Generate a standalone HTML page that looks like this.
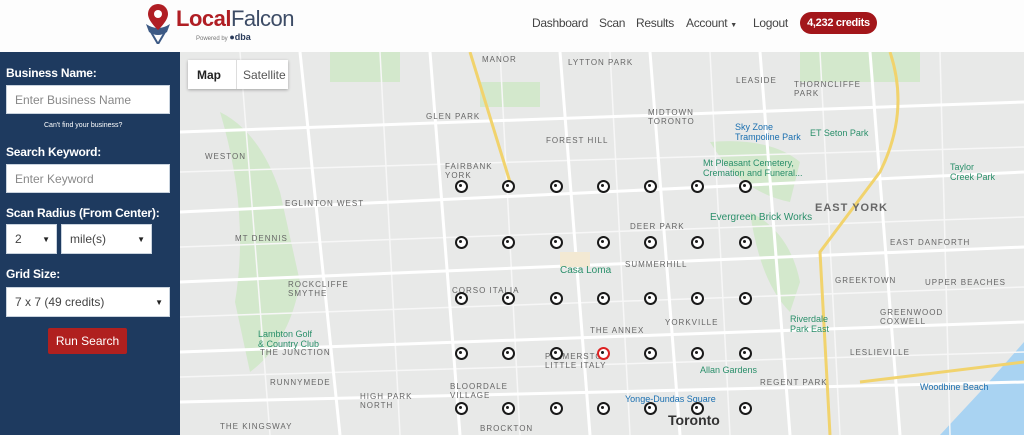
<!DOCTYPE html>
<html><head><meta charset="utf-8"><style>
*{margin:0;padding:0;box-sizing:border-box}
body{width:1024px;height:435px;overflow:hidden;font-family:"Liberation Sans",sans-serif;background:#fff;position:relative}
.hdr{position:absolute;left:0;top:0;width:1024px;height:52px;background:#fdfdfd}
.nav{position:absolute;top:16px;font-size:12px;letter-spacing:-0.3px;color:#444;white-space:nowrap}
.cred{position:absolute;left:800px;top:12px;width:77px;height:22px;background:#a3161a;border-radius:11px;color:#fff;font-size:11px;font-weight:bold;text-align:center;line-height:22px;letter-spacing:-0.3px}
.side{position:absolute;left:0;top:52px;width:180px;height:383px;background:#1e3a5f}
.lbl{position:absolute;left:6px;color:#fff;font-weight:bold;font-size:12px;letter-spacing:-0.2px}
.inp{position:absolute;background:#fff;border:1px solid #c9d3de;color:#888;font-size:12px;padding-left:8px;display:flex;align-items:center}
.sel{color:#444}
.sel b{position:absolute;right:6px;font-size:8px;color:#222}
.map{position:absolute;left:180px;top:52px;width:844px;height:383px;background:#e8e9e8;overflow:hidden}
.mk{position:absolute;width:13px;height:13px;border:2.5px solid #1a1a1a;border-radius:50%;background:#fff}
.mk:after{content:"";position:absolute;left:2.5px;top:2.5px;width:3px;height:3px;background:#1a1a1a;border-radius:50%}
.t{position:absolute;font-size:8px;color:#666;letter-spacing:1px}
</style></head><body>
<div class="hdr">
 <svg style="position:absolute;left:143px;top:2px" width="30" height="42" viewBox="0 0 30 42">
  <path d="M3 22 Q15 30 27 22 L24 30 Q15 36 6 30Z" fill="#3d5a85"/>
  <path d="M8 30 L15 42 L22 30" stroke="#3d5a85" stroke-width="2" fill="none"/>
  <path d="M15 2 A10 10 0 0 1 25 12 C25 19 15 28 15 28 C15 28 5 19 5 12 A10 10 0 0 1 15 2Z" fill="#b01e24"/>
  <circle cx="15" cy="12" r="4" fill="#fff"/>
 </svg>
 <div style="position:absolute;left:176px;top:6px;font-size:22px;letter-spacing:-0.5px"><b style="color:#b01e24">Local</b><span style="color:#3d4c66">Falcon</span></div>
 <div style="position:absolute;left:196px;top:32px;font-size:6px;color:#777">Powered by <b style="font-size:9px;color:#2a3b5a">●dba</b></div>
 <div class="nav" style="left:532px">Dashboard</div>
 <div class="nav" style="left:599px">Scan</div>
 <div class="nav" style="left:636px">Results</div>
 <div class="nav" style="left:686px">Account <span style="font-size:7px">▼</span></div>
 <div class="nav" style="left:753px">Logout</div>
 <div class="cred">4,232 credits</div>
</div>
<div class="side">
 <div class="lbl" style="top:14px">Business Name:</div>
 <div class="inp" style="left:6px;top:33px;width:164px;height:29px">Enter Business Name</div>
 <div style="position:absolute;left:44px;top:70px;font-size:7px;color:#fff">Can't find your business?</div>
 <div class="lbl" style="top:93px">Search Keyword:</div>
 <div class="inp" style="left:6px;top:112px;width:164px;height:29px">Enter Keyword</div>
 <div class="lbl" style="top:154px">Scan Radius (From Center):</div>
 <div class="inp sel" style="left:6px;top:172px;width:51px;height:30px">2<b>▼</b></div>
 <div class="inp sel" style="left:61px;top:172px;width:91px;height:30px">mile(s)<b>▼</b></div>
 <div class="lbl" style="top:215px">Grid Size:</div>
 <div class="inp sel" style="left:6px;top:235px;width:164px;height:30px">7 x 7 (49 credits)<b>▼</b></div>
 <div style="position:absolute;left:48px;top:276px;width:79px;height:26px;background:#b0201f;color:#fff;font-size:12px;text-align:center;line-height:26px;border-radius:2px">Run Search</div>
</div>
<div class="map">
 <svg width="844" height="383" style="position:absolute;left:0;top:0">
  <g fill="#d3e8cc">
   <path d="M40 60 Q80 80 100 140 L120 230 Q110 290 70 320 L55 250 Q70 160 40 60Z"/>
   <path d="M530 90 Q590 85 620 110 L610 150 Q560 140 530 90Z"/>
   <path d="M570 160 Q610 180 620 230 L610 260 Q580 230 570 160Z"/>
   <rect x="150" y="0" width="70" height="30"/>
   <rect x="300" y="30" width="60" height="25"/>
   <rect x="620" y="0" width="120" height="30"/>
  </g>
  <path d="M844 290 L800 340 L760 383 L844 383Z" fill="#a9d3f2"/>
  <g stroke="#f7f7f7" stroke-width="1.5" fill="none">
   <path d="M0 120 L844 95"/><path d="M0 195 L844 165"/><path d="M0 265 L844 235"/><path d="M0 325 L844 300"/>
   <path d="M60 0 L90 383"/><path d="M200 0 L220 383"/><path d="M320 0 L340 383"/><path d="M430 0 L450 383"/><path d="M530 0 L550 383"/><path d="M640 0 L660 383"/><path d="M760 0 L770 383"/>
  </g>
  <g stroke="#fff" stroke-width="3" fill="none">
   <path d="M0 160 L844 120"/><path d="M0 230 L844 195"/><path d="M0 300 L844 270"/><path d="M0 350 L844 330"/>
   <path d="M0 80 L844 50"/><path d="M120 0 L160 383"/><path d="M250 0 L280 383"/><path d="M380 0 L410 383"/>
   <path d="M470 0 L500 383"/><path d="M580 0 L610 383"/><path d="M690 0 L720 383"/>
  </g>
  <g stroke="#f1d36d" stroke-width="3" fill="none">
   <path d="M290 0 L330 130"/>
   <path d="M710 0 Q730 60 700 120 L640 200 L650 383"/>
   <path d="M680 330 L844 310"/>
  </g>
  <rect x="380" y="200" width="30" height="15" fill="#f3e9d3"/>
 </svg>
 <div style="position:absolute;left:8px;top:8px;width:100px;height:29px;background:#fff;box-shadow:0 1px 3px rgba(0,0,0,.3);font-size:12px">
  <span style="position:absolute;left:9px;top:8px;font-weight:bold;color:#222">Map</span>
  <span style="position:absolute;left:48px;top:0;width:1px;height:29px;background:#ddd"></span>
  <span style="position:absolute;left:55px;top:8px;color:#555">Satellite</span>
 </div>
 <div class="t" style="left:302px;top:3px">MANOR</div>
 <div class="t" style="left:388px;top:6px">LYTTON PARK</div>
 <div class="t" style="left:556px;top:24px">LEASIDE</div>
 <div class="t" style="left:614px;top:28px">THORNCLIFFE<br>PARK</div>
 <div class="t" style="left:246px;top:60px">GLEN PARK</div>
 <div class="t" style="left:366px;top:84px">FOREST HILL</div>
 <div class="t" style="left:468px;top:56px">MIDTOWN<br>TORONTO</div>
 <div class="t" style="left:25px;top:100px">WESTON</div>
 <div class="t" style="left:265px;top:110px">FAIRBANK<br>YORK</div>
 <div class="t" style="left:105px;top:147px">EGLINTON WEST</div>
 <div class="t" style="left:635px;top:150px;font-size:11px;font-weight:bold">EAST YORK</div>
 <div class="t" style="left:55px;top:182px">MT DENNIS</div>
 <div class="t" style="left:450px;top:170px">DEER PARK</div>
 <div class="t" style="left:710px;top:186px">EAST DANFORTH</div>
 <div class="t" style="left:445px;top:208px">SUMMERHILL</div>
 <div class="t" style="left:108px;top:228px">ROCKCLIFFE<br>SMYTHE</div>
 <div class="t" style="left:272px;top:234px">CORSO ITALIA</div>
 <div class="t" style="left:655px;top:224px">GREEKTOWN</div>
 <div class="t" style="left:745px;top:226px">UPPER BEACHES</div>
 <div class="t" style="left:700px;top:256px">GREENWOOD<br>COXWELL</div>
 <div class="t" style="left:410px;top:274px">THE ANNEX</div>
 <div class="t" style="left:485px;top:266px">YORKVILLE</div>
 <div class="t" style="left:80px;top:296px">THE JUNCTION</div>
 <div class="t" style="left:670px;top:296px">LESLIEVILLE</div>
 <div class="t" style="left:90px;top:326px">RUNNYMEDE</div>
 <div class="t" style="left:270px;top:330px">BLOORDALE<br>VILLAGE</div>
 <div class="t" style="left:365px;top:300px">PALMERSTON<br>LITTLE ITALY</div>
 <div class="t" style="left:580px;top:326px">REGENT PARK</div>
 <div class="t" style="left:180px;top:340px">HIGH PARK<br>NORTH</div>
 <div class="t" style="left:40px;top:370px">THE KINGSWAY</div>
 <div class="t" style="left:300px;top:372px">BROCKTON</div>
 <div style="position:absolute;left:488px;top:360px;font-size:14px;font-weight:bold;color:#333">Toronto</div>
 <div style="position:absolute;left:380px;top:213px;font-size:10px;color:#2a8f6a">Casa Loma</div>
 <div style="position:absolute;left:530px;top:160px;font-size:10px;color:#2a8f6a">Evergreen Brick Works</div>
 <div style="position:absolute;left:523px;top:106px;font-size:9px;color:#2a8f6a">Mt Pleasant Cemetery,<br>Cremation and Funeral...</div>
 <div style="position:absolute;left:555px;top:70px;font-size:9px;color:#1a6fb0">Sky Zone<br>Trampoline Park</div>
 <div style="position:absolute;left:630px;top:76px;font-size:9px;color:#2a8f6a">ET Seton Park</div>
 <div style="position:absolute;left:78px;top:277px;font-size:9px;color:#2a8f6a">Lambton Golf<br>&amp; Country Club</div>
 <div style="position:absolute;left:610px;top:262px;font-size:9px;color:#2a8f6a">Riverdale<br>Park East</div>
 <div style="position:absolute;left:520px;top:313px;font-size:9px;color:#2a8f6a">Allan Gardens</div>
 <div style="position:absolute;left:445px;top:342px;font-size:9px;color:#1a6fb0">Yonge-Dundas Square</div>
 <div style="position:absolute;left:740px;top:330px;font-size:9px;color:#1a6fb0">Woodbine Beach</div>
 <div style="position:absolute;left:770px;top:110px;font-size:9px;color:#2a8f6a">Taylor<br>Creek Park</div>
</div>
<div id="grid"></div>
<script>
var xs=[461,508,556,603,650,697,745],ys=[186,242,298,353,408],h="";
for(var r=0;r<5;r++)for(var c=0;c<7;c++){var red=(r==3&&c==3);h+='<div class="mk" style="left:'+(xs[c]-6.5)+'px;top:'+(ys[r]-6.5)+'px'+(red?';border-color:#d22':'')+'"></div>';}
document.getElementById('grid').innerHTML=h;
</script>
</body></html>
